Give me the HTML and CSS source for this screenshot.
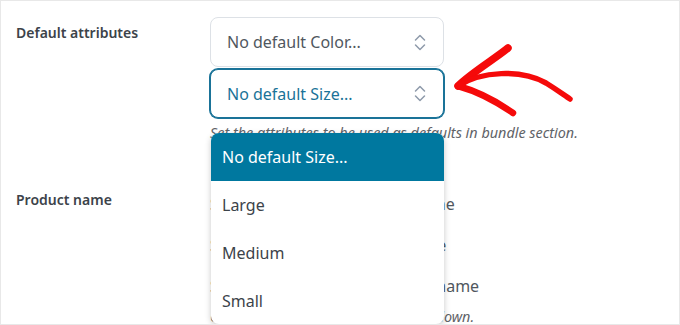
FILE: index.html
```html
<!DOCTYPE html>
<html lang="en">
<head>
<meta charset="utf-8">
<title>Default attributes</title>
<link rel="stylesheet" href="styles.css">
</head>
<body>
<div class="page">
  <div class="row row-attr">
    <div class="label">Default attributes</div>
    <div class="field">
      <div class="select">
        <span class="select-text">No default Color...</span>
        <svg class="chev" width="12" height="17" viewBox="0 0 12 17"><path d="M1.5 6 L6 1.5 L10.5 6 M1.5 11 L6 15.5 L10.5 11" fill="none" stroke="#8e9aaa" stroke-width="1.5" stroke-linecap="round" stroke-linejoin="round"/></svg>
      </div>
      <div class="select focus">
        <span class="select-text">No default Size...</span>
        <svg class="chev" width="12" height="17" viewBox="0 0 12 17"><path d="M1.5 6 L6 1.5 L10.5 6 M1.5 11 L6 15.5 L10.5 11" fill="none" stroke="#8e9aaa" stroke-width="1.5" stroke-linecap="round" stroke-linejoin="round"/></svg>
      </div>
      <p class="desc">Set the attributes to be used as defaults in bundle section.</p>
    </div>
  </div>
  <div class="row row-name">
    <div class="label">Product name</div>
    <div class="field options">
      <div class="opt">Show the parent's product name</div>
      <div class="opt">Show the variant product name</div>
      <div class="opt">Show the product and variant name</div>
      <p class="opt-desc">Choose how the title shows in drop-down.</p>
    </div>
  </div>
  <ul class="dropdown">
    <li class="item active">No default Size...</li>
    <li class="item">Large</li>
    <li class="item">Medium</li>
    <li class="item">Small</li>
  </ul>
  <svg class="arrow" width="140" height="80" viewBox="0 0 140 80">
    <path d="M67 7 C55 17 30 32 17 45" fill="none" stroke="#f50a0a" stroke-width="7.5" stroke-linecap="round"/>
    <path d="M17 45 C35 50 55 60 72 72" fill="none" stroke="#f50a0a" stroke-width="6.5" stroke-linecap="round"/>
    <path d="M17 45 C40 30 80 28 105 42 C118 50 124 55 129 58" fill="none" stroke="#f50a0a" stroke-width="5.5" stroke-linecap="round"/>
  </svg>
</div>
</body>
</html>
```
FILE: styles.css
```css
* { box-sizing: border-box; }
html, body { margin: 0; padding: 0; background: #fff; }
body { font-family: "Noto Sans", "Open Sans", sans-serif; }

.page {
  position: relative;
  width: 680px;
  height: 325px;
  border: 1px solid #e8e8e8;
  overflow: hidden;
  background: #fff;
}

.row {
  display: grid;
  grid-template-columns: 209px 234px;
}
.row-attr { padding-top: 16px; }
.row-name { margin-top: 47px; }

.label {
  padding-left: 15px;
  font-size: 14px;
  line-height: 20px;
  font-weight: 600;
  color: #3c434a;
}
.row-attr .label { padding-top: 6px; }

.field { display: flex; flex-direction: column; }

.select {
  display: flex;
  align-items: center;
  justify-content: space-between;
  height: 50px;
  padding: 0 16px 0 16px;
  border: 1px solid #dde1e6;
  border-radius: 8px;
  color: #50575e;
  font-size: 16px;
  background: #fff;
}
.select.focus {
  margin-top: 2px;
  height: 49px;
  border-color: #1a7398;
  box-shadow: 0 0 0 1px #1a7398;
  color: #1a7398;
}
.chev { margin-right: 1px; }

.desc {
  margin: 5px 0 0 0;
  width: 400px;
  font-size: 14.4px;
  line-height: 20px;
  font-style: italic;
  color: #5f6368;
}

.options { padding-top: 2px; }
.opt {
  font-size: 16px;
  line-height: 24px;
  color: #50575e;
  white-space: nowrap;
  margin-bottom: 17px;
}
.opt-desc {
  margin: -8px 0 0 0;
  font-size: 14.4px;
  line-height: 20px;
  font-style: italic;
  color: #5f6368;
  white-space: nowrap;
}

.dropdown {
  position: absolute;
  left: 210px;
  top: 132px;
  width: 233px;
  height: 191px;
  margin: 0;
  padding: 0;
  list-style: none;
  background: #fff;
  border-radius: 8px;
  overflow: hidden;
  box-shadow: 0 2px 6px rgba(0, 0, 0, 0.22);
}
.item {
  height: 48px;
  display: flex;
  align-items: center;
  padding-left: 11px;
  font-size: 16px;
  color: #3c434a;
}
.item.active {
  background: #00789f;
  color: #fff;
}

.arrow {
  position: absolute;
  left: 440px;
  top: 40px;
}
```
